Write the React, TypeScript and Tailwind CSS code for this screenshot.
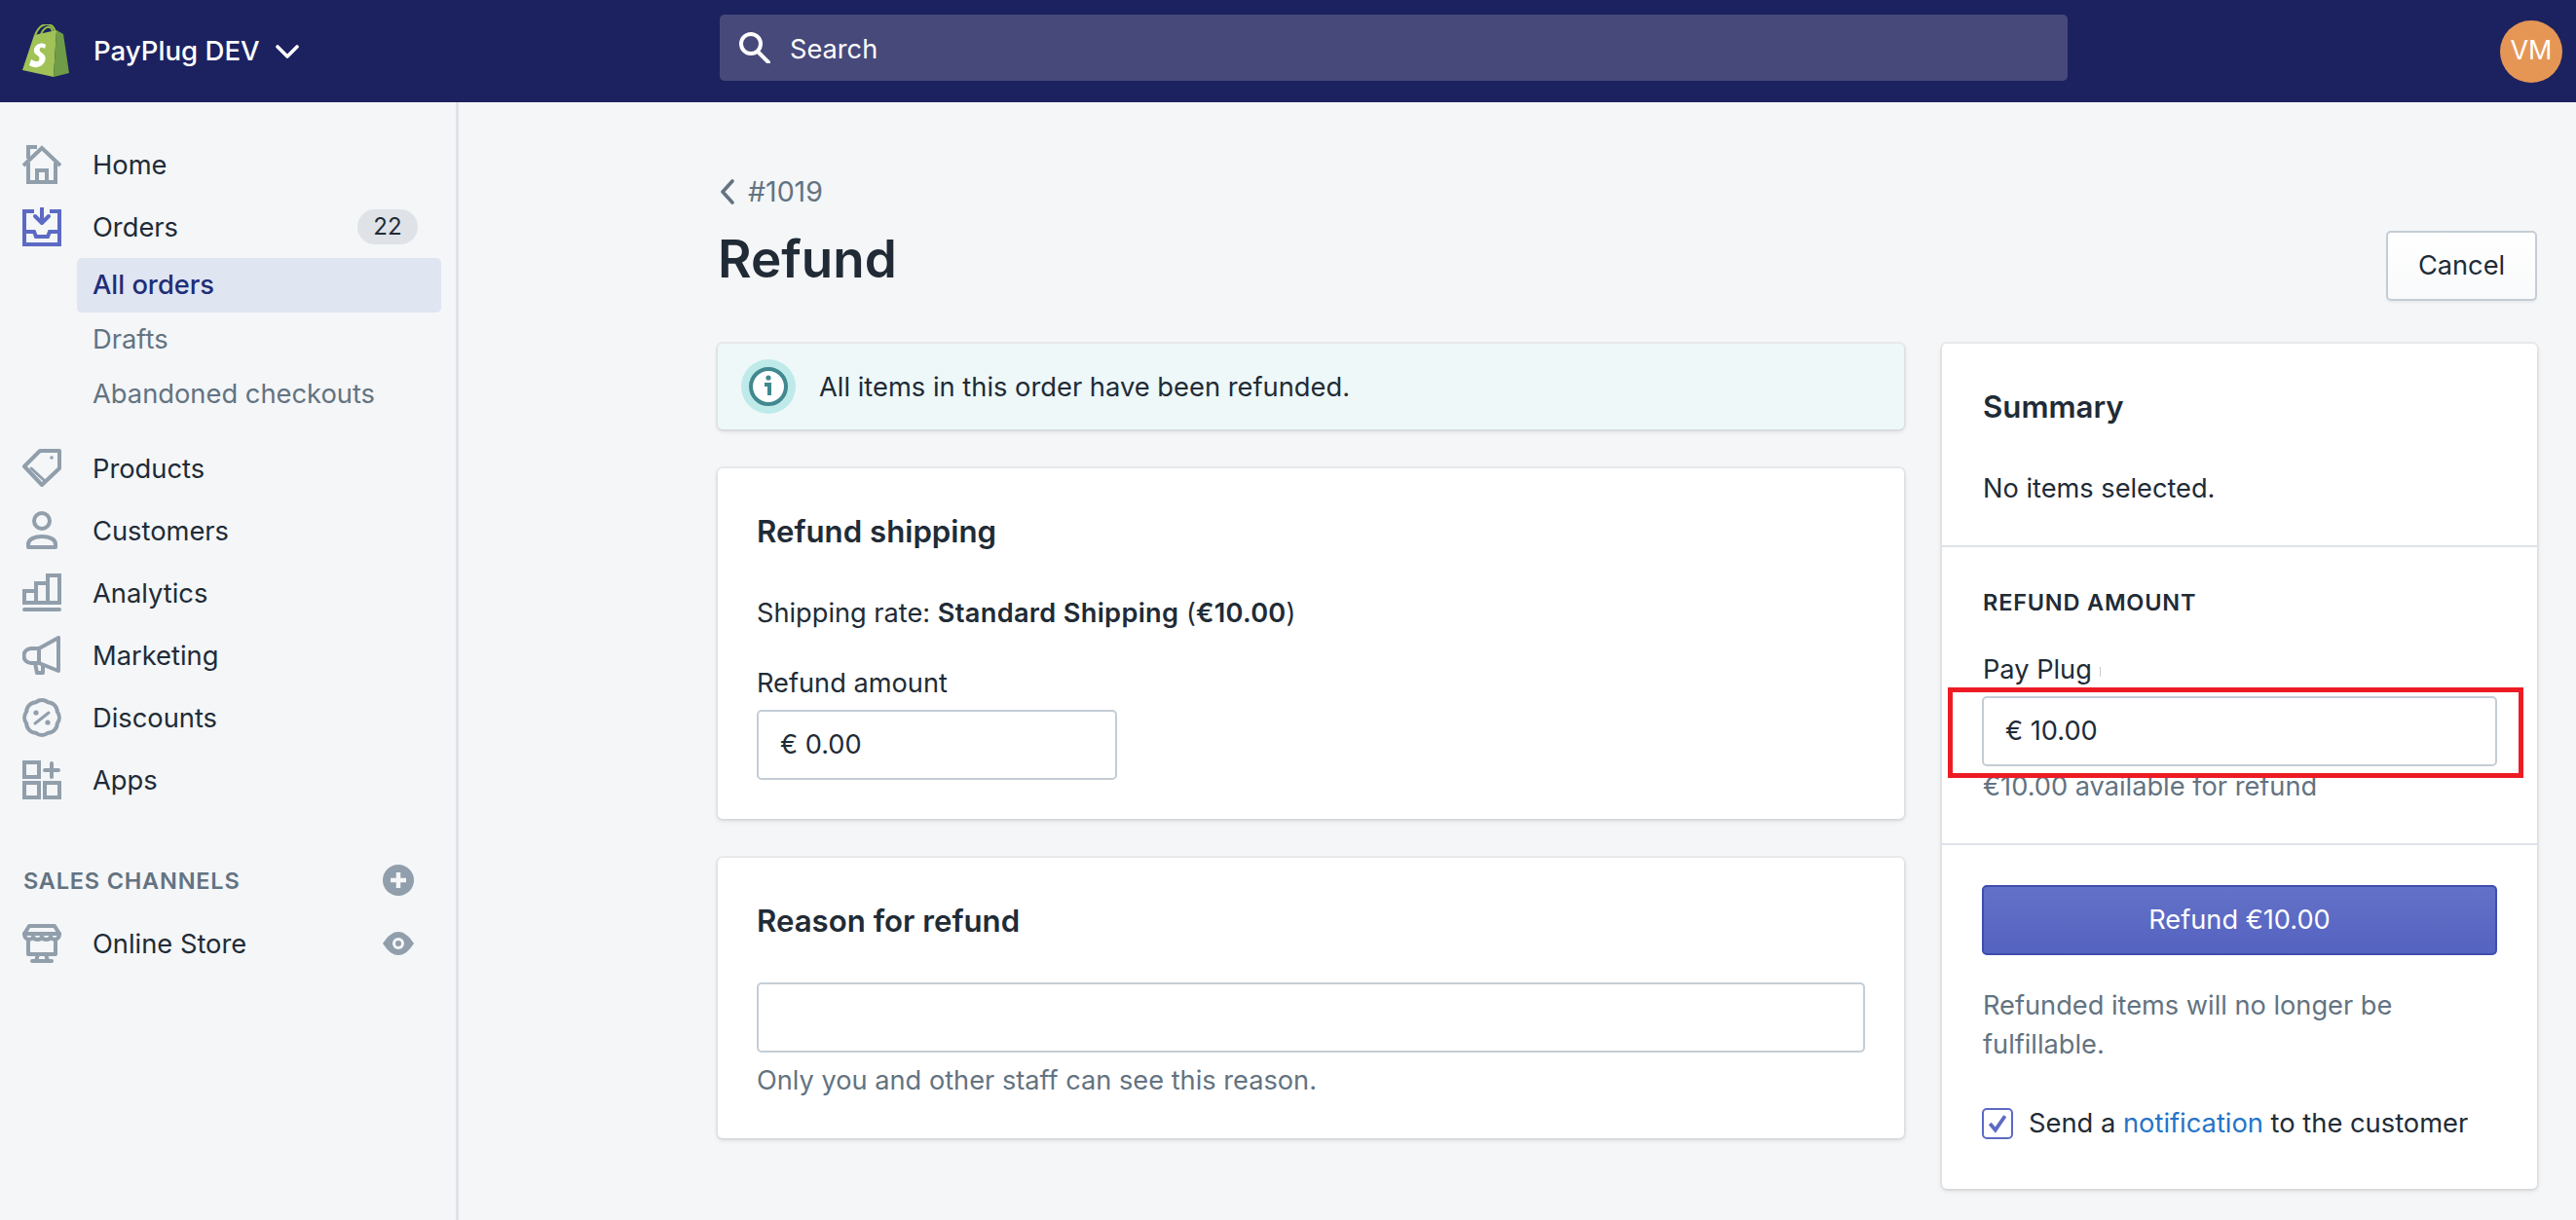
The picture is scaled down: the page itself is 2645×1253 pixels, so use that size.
import type { ReactNode } from "react"

const iconStroke = {
  fill: "none",
  stroke: "#919eab",
  strokeWidth: 4,
  strokeLinejoin: "round" as const,
  strokeLinecap: "round" as const,
}

function Icon({ children }: { children: ReactNode }) {
  return (
    <svg viewBox="0 0 40 40" className="w-[40px] h-[40px] shrink-0">
      {children}
    </svg>
  )
}

const icons: Record<string, ReactNode> = {
  home: (
    <g {...iconStroke} strokeLinejoin="miter" strokeLinecap="butt">
      <path d="M1 21 L20 3 L39 21" />
      <path d="M6 18 V38 H34 V18" />
      <path d="M6 14 V2 H15" />
      <path d="M15 38 V26 H25 V38" />
    </g>
  ),
  orders: (
    <g fill="none" stroke="#5c6ac4" strokeWidth="4">
      <path d="M12 4 H2 V38 H38 V4 H28" />
      <path d="M20 -1 V15" />
      <path d="M13 9 L20 16 L27 9" strokeLinecap="round" strokeLinejoin="round" />
      <path d="M2 25 H12 L14 30 H26 L28 25 H38" />
    </g>
  ),
  products: (
    <g {...iconStroke}>
      <path d="M38 2 V20 L20 37 L2 18 L18 2 Z" />
      <path d="M9 20 L22 32" strokeWidth="3" />
      <circle cx="30" cy="9" r="1.8" fill="#919eab" stroke="none" />
    </g>
  ),
  customers: (
    <g {...iconStroke}>
      <circle cx="20" cy="10" r="8" />
      <path d="M6 37 V34 C6 29 12 26 20 26 S34 29 34 34 V37 Z" />
    </g>
  ),
  analytics: (
    <g {...iconStroke} strokeLinejoin="miter">
      <path d="M2 18 H14 V30 H2 Z" />
      <path d="M14 10 H26 V30 H14 Z" />
      <path d="M26 2 H38 V30 H26 Z" />
      <path d="M2 37 H38" />
    </g>
  ),
  marketing: (
    <g {...iconStroke}>
      <path d="M37 2 V36 L17 28 H9 A7.5 7.5 0 0 1 9 13 H17 Z" />
      <path d="M17 13 V28" />
      <path d="M13 28 L15 38 H21 L21 30" />
    </g>
  ),
  discounts: (
    <g {...iconStroke}>
      <path d="M26.1 4.2 A10 10 0 0 1 35.8 13.9 A10 10 0 0 1 35.8 26.1 A10 10 0 0 1 26.1 35.8 A10 10 0 0 1 13.9 35.8 A10 10 0 0 1 4.2 26.1 A10 10 0 0 1 4.2 13.9 A10 10 0 0 1 13.9 4.2 A10 10 0 0 1 26.1 4.2 Z" />
      <path d="M13 26 L27 15" strokeWidth="3" />
      <circle cx="14" cy="15" r="2.6" fill="#919eab" stroke="none" />
      <circle cx="26" cy="25" r="2.6" fill="#919eab" stroke="none" />
    </g>
  ),
  apps: (
    <g {...iconStroke} strokeLinejoin="miter">
      <rect x="2" y="2" width="15" height="15" />
      <rect x="2" y="23" width="15" height="15" />
      <rect x="23" y="23" width="15" height="15" />
      <path d="M23 10 H37 M30 3 V17" />
    </g>
  ),
  store: (
    <g {...iconStroke}>
      <path d="M7 2 H33 L38 10 C38 17 30 17 29 13 C28 17 21 17 20 13 C19 17 12 17 11 13 C10 17 2 17 2 10 Z" />
      <path d="M2 10 H38" />
      <path d="M6 17 V31 H34 V17" />
      <path d="M16 31 L14 38 H26 L24 31 M10 38 H30" />
    </g>
  ),
}

function NavRow({ icon, label, right }: { icon: string; label: string; right?: ReactNode }) {
  return (
    <div className="h-[64px] flex items-center pl-[23px]">
      <Icon>{icons[icon]}</Icon>
      <span className="ml-[32px] mt-[2px] text-[27.3px] text-[#212b36]">{label}</span>
      {right}
    </div>
  )
}

function SubRow({ label, active }: { label: string; active?: boolean }) {
  return (
    <div
      className={
        active
          ? "h-[56px] ml-[79px] mr-[15px] pl-[16px] pt-[1px] flex items-center rounded-[5px] bg-[#e0e5f2] text-[27.3px] font-medium text-[#202e78]"
          : "h-[56px] ml-[79px] mr-[15px] pl-[16px] pt-[1px] flex items-center text-[27.3px] text-[#637381]"
      }
    >
      {label}
    </div>
  )
}

function Sidebar() {
  return (
    <aside className="w-[471px] shrink-0 border-r-[3px] border-[#dfe3e8] pt-[32px]">
      <NavRow icon="home" label="Home" />
      <NavRow
        icon="orders"
        label="Orders"
        right={
          <span className="ml-auto mr-[39px] w-[62px] h-[36px] rounded-full bg-[#dfe3e8] flex items-center justify-center text-[24px] text-[#212b36]">
            22
          </span>
        }
      />
      <SubRow label="All orders" active />
      <SubRow label="Drafts" />
      <SubRow label="Abandoned checkouts" />
      <div className="h-[16px]" />
      <NavRow icon="products" label="Products" />
      <NavRow icon="customers" label="Customers" />
      <NavRow icon="analytics" label="Analytics" />
      <NavRow icon="marketing" label="Marketing" />
      <NavRow icon="discounts" label="Discounts" />
      <NavRow icon="apps" label="Apps" />
      <div className="mt-[51px] h-[40px] pl-[24px] pr-[43px] flex items-center justify-between">
        <span className="mt-[1px] text-[23.5px] font-semibold tracking-[0.8px] text-[#637381]">SALES CHANNELS</span>
        <svg viewBox="0 0 32 32" className="w-[32px] h-[32px]">
          <circle cx="16" cy="16" r="16" fill="#919eab" />
          <path d="M16 8 V24 M8 16 H24" stroke="#f4f6f8" strokeWidth="4.5" />
        </svg>
      </div>
      <div className="mt-[13px]">
        <NavRow
          icon="store"
          label="Online Store"
          right={
            <svg viewBox="0 0 32 24" className="ml-auto mr-[43px] w-[32px] h-[24px]">
              <path d="M0 12 C6 3 11 0 16 0 S26 3 32 12 C26 21 21 24 16 24 S6 21 0 12 Z" fill="#919eab" />
              <circle cx="16" cy="12" r="6" fill="#f4f6f8" />
              <circle cx="16" cy="12" r="3" fill="#919eab" />
            </svg>
          }
        />
      </div>
    </aside>
  )
}

function TopBar() {
  return (
    <header className="h-[105px] shrink-0 bg-[#1c2260] flex items-center">
      <svg viewBox="0 0 48 54" className="ml-[23px] w-[48px] h-[54px] shrink-0 -mt-[1px]">
        <path d="M13 11 C16 4 20 0 25 0 C30 0 33 3 34 9" fill="none" stroke="#95bf47" strokeWidth="2" />
        <path d="M19 10 C21 5 25 2 28 3 C31 4 31 7 31 9" fill="none" stroke="#95bf47" strokeWidth="2" />
        <path d="M12 11 L35 6 L32 54 L0 47 Z" fill="#a0c257" />
        <path d="M35 6 L42 10 L48 50 L32 54 Z" fill="#6f9c47" />
        <path
          d="M24 21 C22 19 18 19 15 21 C11 24 11 29 14 31 C17 33 18 34 17 37 C16 39 12 38 9 36 L7 42 C11 45 17 45 21 41 C25 37 24 32 21 30 C18 28 17 27 18 25 C19 23 21 24 23 25 Z"
          fill="#ffffff"
        />
      </svg>
      <span className="ml-[25px] text-[27.6px] font-medium text-white leading-none">PayPlug DEV</span>
      <svg viewBox="0 0 24 14" className="ml-[16px] w-[24px] h-[14px]">
        <path d="M2 2 L12 12 L22 2" fill="none" stroke="#ffffff" strokeWidth="3.6" strokeLinecap="round" strokeLinejoin="round" />
      </svg>
      <div className="absolute left-[739px] top-[15px] w-[1384px] h-[68px] rounded-[5px] bg-[#47497b] flex items-center pl-[20px]">
        <svg viewBox="0 0 32 32" className="w-[32px] h-[32px]">
          <circle cx="12" cy="12" r="10" fill="none" stroke="#ffffff" strokeWidth="4" />
          <path d="M19 20 L30 31" stroke="#ffffff" strokeWidth="4" strokeLinecap="round" />
        </svg>
        <span className="ml-[20px] mt-[5px] text-[27.2px] text-white">Search</span>
      </div>
      <div className="ml-auto mr-[14px] w-[64px] h-[64px] rounded-full bg-[#e59655] flex items-center justify-center text-[27px] text-white">
        VM
      </div>
    </header>
  )
}

function Card({ children, className }: { children: ReactNode; className: string }) {
  return (
    <section
      className={
        "rounded-[5px] bg-white shadow-[0_0_0_2px_rgba(63,63,68,0.05),0_2px_5px_rgba(63,63,68,0.15)] " + className
      }
    >
      {children}
    </section>
  )
}

function TextField({ className, children }: { className: string; children?: ReactNode }) {
  return (
    <div
      className={
        "h-[72px] rounded-[5px] border-[2px] border-[#c4cdd5] bg-white flex items-center pl-[22px] text-[27.2px] text-[#212b36] " +
        className
      }
    >
      {children}
    </div>
  )
}

function LeftColumn() {
  return (
    <div className="w-[1218px] flex flex-col gap-[40px]">
      <div className="h-[88px] rounded-[5px] bg-[#eef8f9] shadow-[0_0_0_2px_rgba(63,63,68,0.05),0_2px_5px_rgba(63,63,68,0.15)] flex items-center pl-[24px]">
        <svg viewBox="0 0 56 56" className="w-[56px] h-[56px] shrink-0">
          <circle cx="28" cy="28" r="28" fill="#bfeaea" />
          <circle cx="28" cy="28" r="18" fill="#ffffff" stroke="#41888f" strokeWidth="4" />
          <circle cx="28" cy="19" r="2.6" fill="#41888f" />
          <path d="M24 26 H29 V37" fill="none" stroke="#41888f" strokeWidth="4" />
        </svg>
        <span className="ml-[24px] mt-[2px] text-[27.3px] text-[#212b36]">All items in this order have been refunded.</span>
      </div>

      <Card className="h-[360px] px-[40px] flex flex-col">
        <h2 className="mt-[45px] leading-[40px] text-[31.2px] font-semibold text-[#212b36]">Refund shipping</h2>
        <p className="mt-[44px] leading-[40px] text-[27.2px] text-[#212b36]">
          Shipping rate: <b className="font-semibold tracking-[0.3px]">Standard Shipping</b> (<b className="font-semibold tracking-[0.3px]">€10.00</b>)
        </p>
        <p className="mt-[32px] leading-[40px] text-[27.2px] text-[#212b36]">Refund amount</p>
        <TextField className="mt-[7px] w-[370px]">€ 0.00</TextField>
      </Card>

      <Card className="h-[288px] px-[40px] flex flex-col">
        <h2 className="mt-[45px] leading-[40px] text-[31.2px] font-semibold text-[#212b36]">Reason for refund</h2>
        <TextField className="mt-[43px]" />
        <p className="mt-[9px] leading-[40px] text-[27.2px] text-[#637381]">Only you and other staff can see this reason.</p>
      </Card>
    </div>
  )
}

function SummaryCard() {
  return (
    <Card className="relative w-[611px] h-[868px] flex flex-col">
      <div className="h-[209px] shrink-0 px-[42px] border-b-[2px] border-[#dfe3e8]">
        <h2 className="mt-[45px] leading-[40px] text-[31.2px] font-semibold text-[#212b36]">Summary</h2>
        <p className="mt-[44px] leading-[40px] text-[27.2px] text-[#212b36]">No items selected.</p>
      </div>
      <div className="h-[306px] shrink-0 px-[42px] border-b-[2px] border-[#dfe3e8]">
        <h3 className="mt-[41px] leading-[32px] text-[23.5px] font-semibold tracking-[0.8px] text-[#212b36]">REFUND AMOUNT</h3>
        <div className="mt-[33px] flex items-center">
          <span className="leading-[40px] text-[27.2px] text-[#212b36]">Pay Plug</span>
          <span className="ml-[8px] mt-[3px] w-[1px] h-[10px] bg-[#c4cdd5]" />
        </div>
        <TextField className="mt-[7px] -mx-[1px]">€ 10.00</TextField>
        <p className="mt-[1px] leading-[40px] text-[27.2px] text-[#637381]">€10.00 available for refund</p>
      </div>
      <div className="px-[42px] flex flex-col">
        <button className="mt-[41px] -mx-[1px] h-[72px] rounded-[5px] border-[2px] border-[#3f4eae] bg-gradient-to-b from-[#6371c7] to-[#5563c1] text-[27.2px] text-white">
          Refund €10.00
        </button>
        <p className="mt-[32px] leading-[40px] text-[27.2px] text-[#637381]">
          Refunded items will no longer be
          <br />
          fulfillable.
        </p>
        <div className="mt-[41px] flex items-center">
          <span className="-ml-[1px] w-[32px] h-[32px] rounded-[5px] border-[2px] border-[#5c6ac4] bg-white flex items-center justify-center">
            <svg viewBox="0 0 20 20" className="w-[22px] h-[22px]">
              <path d="M3 10 L8 16 L17 3" fill="none" stroke="#5c6ac4" strokeWidth="3.4" />
            </svg>
          </span>
          <span className="ml-[16px] text-[27.3px] text-[#212b36]">
            Send a <span className="text-[#2474c8]">notification</span> to the customer
          </span>
        </div>
      </div>
      {/* red annotation drawn over the screenshot */}
      <div className="absolute left-[6px] top-[353px] w-[591px] h-[93px] border-[5px] border-[#ed1c24]" />
    </Card>
  )
}

export default function App() {
  return (
    <div className="relative h-screen w-full flex flex-col overflow-hidden bg-[#f4f6f8] font-['Inter',sans-serif]">
      <TopBar />
      <div className="flex-1 flex min-h-0">
        <Sidebar />
        <main className="flex-1 pl-[266px] pr-[40px] pt-[72px]">
          <div className="h-[132px] mb-[44px] flex justify-between items-end">
            <div className="h-full">
              <div className="h-[40px] flex items-center">
                <svg viewBox="0 0 16 26" className="ml-[2px] w-[16px] h-[26px]">
                  <path d="M13 2 L3 13 L13 24" fill="none" stroke="#637381" strokeWidth="3.6" strokeLinecap="round" strokeLinejoin="round" />
                </svg>
                <span className="ml-[13px] text-[28.5px] text-[#637381]">#1019</span>
              </div>
              <h1 className="mt-[21px] leading-[56px] text-[53px] font-semibold text-[#212b36]">Refund</h1>
            </div>
            <button className="w-[155px] h-[72px] rounded-[5px] border-[2px] border-[#c4cdd5] bg-gradient-to-b from-white to-[#f9fafb] shadow-[0_2px_2px_rgba(22,29,37,0.05)] text-[27.2px] text-[#212b36]">
              Cancel
            </button>
          </div>
          <div className="flex justify-between items-start">
            <LeftColumn />
            <SummaryCard />
          </div>
        </main>
      </div>
    </div>
  )
}
